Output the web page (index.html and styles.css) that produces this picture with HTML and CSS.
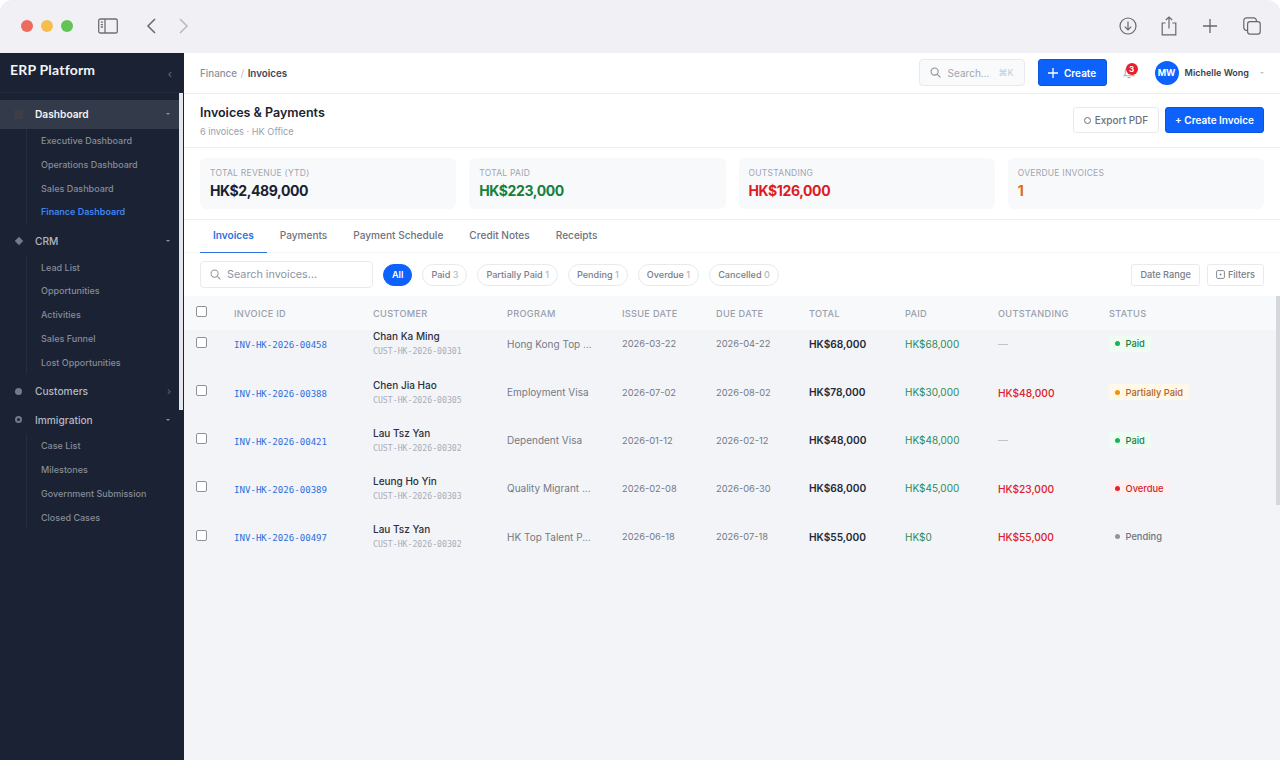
FILE: index.html
```html
<!DOCTYPE html>
<html lang="en">
<head>
  <meta charset="UTF-8">
  <title>Invoices &amp; Payments</title>
  <link rel="stylesheet" href="styles.css">
</head>
<body>
  <!-- Browser chrome -->
  <div class="browser-bar">
    <div class="browser-left">
      <span class="light light-red"></span>
      <span class="light light-yellow"></span>
      <span class="light light-green"></span>
      <svg class="sidebar-toggle" width="20" height="16" viewBox="0 0 20 16" fill="none" stroke="#6f7075" stroke-width="1.3">
        <rect x="0.7" y="1" width="18.6" height="14" rx="1.6"/>
        <path d="M7 1v14M2.8 4.2h2.2M2.8 6.6h2.2M2.8 9h2.2"/>
      </svg>
      <svg class="nav-back" width="10" height="16" viewBox="0 0 10 16" fill="none" stroke="#67686d" stroke-width="1.5"><path d="M9 1 2 8l7 7"/></svg>
      <svg class="nav-forward" width="10" height="16" viewBox="0 0 10 16" fill="none" stroke="#b9bac0" stroke-width="1.5"><path d="m1 1 7 7-7 7"/></svg>
    </div>
    <div class="browser-right">
      <svg width="18" height="18" viewBox="0 0 18 18" fill="none" stroke="#67686d" stroke-width="1.2"><circle cx="9" cy="9" r="8"/><path d="M9 4.6v8M5.8 9.6 9 12.8l3.2-3.2"/></svg>
      <svg width="16" height="20" viewBox="0 0 16 20" fill="none" stroke="#67686d" stroke-width="1.2"><path d="M4.6 7H1.2v11.8h13.6V7h-3.4M8 12.6V1M4.8 4 8 1l3.2 3"/></svg>
      <svg width="14" height="14" viewBox="0 0 14 14" fill="none" stroke="#67686d" stroke-width="1.3"><path d="M7 0v14M0 7h14"/></svg>
      <svg width="18" height="18" viewBox="0 0 18 18" fill="none" stroke="#67686d" stroke-width="1.2"><rect x="4.6" y="4.6" width="12.6" height="12.6" rx="2.4"/><path d="M4.6 13.4h-1A2.8 2.8 0 0 1 .8 10.6V3.4A2.6 2.6 0 0 1 3.4.8h7.2a2.8 2.8 0 0 1 2.8 2.8v1"/></svg>
    </div>
  </div>

  <div class="app">
    <!-- Sidebar -->
    <aside class="sidebar">
      <div class="brand">
        <span class="brand-name">ERP Platform</span>
        <span class="brand-collapse">&#8249;</span>
      </div>
      <nav class="nav">
        <div class="nav-section nav-section-open">
          <span class="nav-icon nav-icon-square"></span>
          <span class="nav-label">Dashboard</span>
          <span class="caret-down"></span>
        </div>
        <div class="nav-sub">
          <a class="nav-link">Executive Dashboard</a>
          <a class="nav-link">Operations Dashboard</a>
          <a class="nav-link">Sales Dashboard</a>
          <a class="nav-link nav-link-active">Finance Dashboard</a>
        </div>
        <div class="nav-section">
          <span class="nav-icon nav-icon-diamond"></span>
          <span class="nav-label">CRM</span>
          <span class="caret-down"></span>
        </div>
        <div class="nav-sub">
          <a class="nav-link">Lead List</a>
          <a class="nav-link">Opportunities</a>
          <a class="nav-link">Activities</a>
          <a class="nav-link">Sales Funnel</a>
          <a class="nav-link">Lost Opportunities</a>
        </div>
        <div class="nav-section">
          <span class="nav-icon nav-icon-dot"></span>
          <span class="nav-label">Customers</span>
          <span class="caret-right">&#8250;</span>
        </div>
        <div class="nav-section">
          <span class="nav-icon nav-icon-ring"></span>
          <span class="nav-label">Immigration</span>
          <span class="caret-down"></span>
        </div>
        <div class="nav-sub">
          <a class="nav-link">Case List</a>
          <a class="nav-link">Milestones</a>
          <a class="nav-link">Government Submission</a>
          <a class="nav-link">Closed Cases</a>
        </div>
      </nav>
      <div class="sidebar-scroll"></div>
    </aside>

    <main class="content">
      <!-- Top bar -->
      <header class="topbar">
        <div class="crumbs">
          <span>Finance</span><span class="crumb-sep">/</span><span class="crumb-current">Invoices</span>
        </div>
        <div class="topbar-tools">
          <div class="global-search">
            <svg width="11" height="11" viewBox="0 0 12 12" fill="none" stroke="#8d929c" stroke-width="1.2"><circle cx="5" cy="5" r="3.9"/><path d="m8 8 3.4 3.4"/></svg>
            <span class="global-search-text">Search...</span>
            <span class="global-search-key">&#8984;K</span>
          </div>
          <button class="btn-create">
            <svg width="10" height="10" viewBox="0 0 10 10" fill="none" stroke="#fff" stroke-width="1.3"><path d="M5 0v10M0 5h10"/></svg>
            Create
          </button>
          <div class="bell">
            <svg width="12" height="13" viewBox="0 0 12 13" fill="none" stroke="#a9aeb8" stroke-width="1.1"><path d="M1 9.8h10L9.7 8V5a3.7 3.7 0 0 0-7.4 0v3L1 9.8ZM4.6 11.6h2.8"/></svg>
            <span class="bell-badge">3</span>
          </div>
          <div class="user">
            <span class="avatar">MW</span>
            <span class="user-name">Michelle Wong</span>
            <span class="user-caret"></span>
          </div>
        </div>
      </header>

      <!-- Page heading -->
      <section class="page-head">
        <div class="page-title">
          <h1>Invoices &amp; Payments</h1>
          <p>6 invoices &middot; HK Office</p>
        </div>
        <div class="page-actions">
          <button class="btn-outline"><span class="export-ring"></span>Export PDF</button>
          <button class="btn-primary">+ Create Invoice</button>
        </div>
      </section>

      <!-- Stats -->
      <section class="stats">
        <div class="stat-card">
          <div class="stat-label">Total Revenue (YTD)</div>
          <div class="stat-value">HK$2,489,000</div>
        </div>
        <div class="stat-card">
          <div class="stat-label">Total Paid</div>
          <div class="stat-value stat-green">HK$223,000</div>
        </div>
        <div class="stat-card">
          <div class="stat-label">Outstanding</div>
          <div class="stat-value stat-red">HK$126,000</div>
        </div>
        <div class="stat-card">
          <div class="stat-label">Overdue Invoices</div>
          <div class="stat-value stat-orange">1</div>
        </div>
      </section>

      <!-- Tabs -->
      <div class="tabs">
        <a class="tab tab-active">Invoices</a>
        <a class="tab">Payments</a>
        <a class="tab">Payment Schedule</a>
        <a class="tab">Credit Notes</a>
        <a class="tab">Receipts</a>
      </div>

      <!-- Filters -->
      <div class="filters">
        <div class="invoice-search">
          <svg width="11" height="11" viewBox="0 0 12 12" fill="none" stroke="#8d929c" stroke-width="1.1"><circle cx="5" cy="5" r="3.9"/><path d="m8 8 3.4 3.4"/></svg>
          <span>Search invoices...</span>
        </div>
        <div class="chips">
          <span class="chip chip-active">All</span>
          <span class="chip">Paid <em>3</em></span>
          <span class="chip">Partially Paid <em>1</em></span>
          <span class="chip">Pending <em>1</em></span>
          <span class="chip">Overdue <em>1</em></span>
          <span class="chip">Cancelled <em>0</em></span>
        </div>
        <div class="filter-actions">
          <button class="btn-small">Date Range</button>
          <button class="btn-small">
            <svg width="9" height="9" viewBox="0 0 9 9" fill="none" stroke="#777d88" stroke-width="0.9"><rect x="0.6" y="0.6" width="7.8" height="7.8" rx="1"/><circle cx="4.5" cy="4.5" r="0.6" fill="#777d88"/></svg>
            Filters
          </button>
        </div>
      </div>

      <!-- Table -->
      <div class="table">
        <div class="row row-head">
          <input type="checkbox" class="check">
          <span>Invoice ID</span>
          <span>Customer</span>
          <span>Program</span>
          <span>Issue Date</span>
          <span>Due Date</span>
          <span>Total</span>
          <span>Paid</span>
          <span>Outstanding</span>
          <span>Status</span>
        </div>
        <div class="table-body">
          <div class="rows">
            <div class="row">
              <input type="checkbox" class="check">
              <span class="inv-id">INV-HK-2026-00458</span>
              <div><div class="cust-name">Chan Ka Ming</div><div class="cust-id">CUST-HK-2026-00301</div></div>
              <span class="cell">Hong Kong Top ...</span>
              <span class="date">2026-03-22</span>
              <span class="date">2026-04-22</span>
              <span class="total">HK$68,000</span>
              <span class="paid">HK$68,000</span>
              <span class="none">&mdash;</span>
              <div><span class="status status-paid"><i></i>Paid</span></div>
            </div>
            <div class="row">
              <input type="checkbox" class="check">
              <span class="inv-id">INV-HK-2026-00388</span>
              <div><div class="cust-name">Chen Jia Hao</div><div class="cust-id">CUST-HK-2026-00305</div></div>
              <span class="cell">Employment Visa</span>
              <span class="date">2026-07-02</span>
              <span class="date">2026-08-02</span>
              <span class="total">HK$78,000</span>
              <span class="paid">HK$30,000</span>
              <span class="owed">HK$48,000</span>
              <div><span class="status status-partial"><i></i>Partially Paid</span></div>
            </div>
            <div class="row">
              <input type="checkbox" class="check">
              <span class="inv-id">INV-HK-2026-00421</span>
              <div><div class="cust-name">Lau Tsz Yan</div><div class="cust-id">CUST-HK-2026-00302</div></div>
              <span class="cell">Dependent Visa</span>
              <span class="date">2026-01-12</span>
              <span class="date">2026-02-12</span>
              <span class="total">HK$48,000</span>
              <span class="paid">HK$48,000</span>
              <span class="none">&mdash;</span>
              <div><span class="status status-paid"><i></i>Paid</span></div>
            </div>
            <div class="row">
              <input type="checkbox" class="check">
              <span class="inv-id">INV-HK-2026-00389</span>
              <div><div class="cust-name">Leung Ho Yin</div><div class="cust-id">CUST-HK-2026-00303</div></div>
              <span class="cell">Quality Migrant ...</span>
              <span class="date">2026-02-08</span>
              <span class="date">2026-06-30</span>
              <span class="total">HK$68,000</span>
              <span class="paid">HK$45,000</span>
              <span class="owed">HK$23,000</span>
              <div><span class="status status-overdue"><i></i>Overdue</span></div>
            </div>
            <div class="row">
              <input type="checkbox" class="check">
              <span class="inv-id">INV-HK-2026-00497</span>
              <div><div class="cust-name">Lau Tsz Yan</div><div class="cust-id">CUST-HK-2026-00302</div></div>
              <span class="cell">HK Top Talent P...</span>
              <span class="date">2026-06-18</span>
              <span class="date">2026-07-18</span>
              <span class="total">HK$55,000</span>
              <span class="paid">HK$0</span>
              <span class="owed">HK$55,000</span>
              <div><span class="status status-pending"><i></i>Pending</span></div>
            </div>
          </div>
        </div>
        <div class="table-scroll"></div>
      </div>
    </main>
  </div>
</body>
</html>
```

FILE: styles.css
```css
:root {
  --blue: #0d62fb;
  --link-blue: #2f6fe0;
  --navy: #1a2233;
  --ink: #1d2433;
  --text: #5f6672;
  --muted: #9aa0ab;
  --line: #eceef1;
  --soft: #f8f9fb;
  --page: #f3f4f7;
}

* {
  box-sizing: border-box;
}

html, body {
  height: 100%;
}

body {
  margin: 0;
  overflow: hidden;
  background: #fff;
  color: var(--ink);
  font-family: Inter, "Liberation Sans", sans-serif;
  font-size: 10px;
}

button {
  font-family: inherit;
  cursor: pointer;
}

/* Browser chrome */
.browser-bar {
  height: 53px;
  display: flex;
  align-items: center;
  justify-content: space-between;
  padding: 0 19px 1px 21px;
  background: #f1f1f5;
  border-radius: 12px 12px 0 0;
}

.browser-left {
  display: flex;
  align-items: center;
}

.browser-right {
  display: flex;
  align-items: center;
  gap: 25px;
}

.browser-right svg:nth-child(2) {
  margin: 0 1px 0 -1px;
}

.browser-right svg:nth-child(3) {
  margin-right: 1px;
}

.light {
  width: 12px;
  height: 12px;
  border-radius: 50%;
  margin-right: 8px;
}

.light-red { background: #ec6a5e; }
.light-yellow { background: #f4bf4f; }
.light-green { background: #61c454; }

.sidebar-toggle {
  margin-left: 17px;
}

.nav-back {
  margin-left: 28px;
}

.nav-forward {
  margin-left: 23px;
}

/* App layout */
.app {
  display: flex;
  height: 707px;
}

.sidebar {
  position: relative;
  flex: 0 0 184px;
  background: var(--navy);
  color: #fff;
}

.brand {
  height: 40px;
  display: flex;
  align-items: flex-start;
  justify-content: space-between;
  padding: 8px 12px 0 10px;
  border-bottom: 1px solid #222a3b;
}

.brand-name {
  font-family: Lato, Inter, sans-serif;
  font-size: 14px;
  font-weight: 700;
  letter-spacing: 0.2px;
  color: #f3f4f6;
}

.brand-collapse {
  margin-top: 8px;
  font-size: 11px;
  line-height: 11px;
  color: #6b7280;
}

.nav {
  padding-top: 7px;
  padding-right: 5px;
}

.nav-section {
  display: flex;
  align-items: center;
  height: 28.5px;
  padding: 0 9px 0 14px;
  font-size: 10.2px;
  font-weight: 500;
  color: #b4b9c2;
}

.nav-section-open {
  background: #333a49;
  color: #f0f1f3;
  font-weight: 600;
}

.nav-icon {
  width: 9px;
  height: 9px;
  margin-right: 12px;
  flex: none;
}

.nav-icon-square {
  background: #3f3d47;
  border-radius: 1px;
}

.nav-icon-diamond {
  width: 6px;
  height: 6px;
  margin: 0 13.5px 0 1.5px;
  background: #737986;
  transform: rotate(45deg);
}

.nav-icon-dot {
  width: 7px;
  height: 7px;
  margin: 0 13px 0 1px;
  background: #737986;
  border-radius: 50%;
}

.nav-icon-ring {
  width: 7px;
  height: 7px;
  margin: 0 13px 0 1px;
  border: 2px solid #737986;
  border-radius: 50%;
}

.nav-label {
  flex: 1;
}

.caret-down {
  width: 0;
  height: 0;
  border-left: 2px solid transparent;
  border-right: 2px solid transparent;
  border-top: 2px solid #8b909b;
}

.caret-right {
  margin-right: -1px;
  font-size: 10px;
  color: #5f6573;
}

.nav-sub {
  display: flex;
  flex-direction: column;
  margin: 0.5px 0 2.5px 26px;
  padding-left: 14px;
  border-left: 1px solid #252d3e;
}

.nav-link {
  height: 23.75px;
  line-height: 23.75px;
  font-size: 9px;
  font-weight: 500;
  color: #868c98;
}

.nav-link-active {
  color: #3f84f2;
  font-weight: 600;
}

.sidebar-scroll {
  position: absolute;
  top: 40px;
  right: 1px;
  width: 4px;
  height: 317px;
  background: #e3e6ea;
}

/* Main content */
.content {
  flex: 1;
  min-width: 0;
  display: flex;
  flex-direction: column;
  background: #fff;
}

.topbar {
  height: 41px;
  flex: none;
  display: flex;
  align-items: center;
  justify-content: space-between;
  padding: 0 16px 1px;
  border-bottom: 1px solid var(--line);
}

.crumbs {
  display: flex;
  gap: 3.5px;
  margin-top: 1px;
  font-size: 9.8px;
  font-weight: 500;
  color: #8b919c;
}

.crumb-sep {
  color: #c2c6cd;
}

.crumb-current {
  color: #3f4653;
  font-weight: 600;
}

.topbar-tools {
  display: flex;
  align-items: center;
}

.global-search {
  width: 106px;
  height: 27px;
  display: flex;
  align-items: center;
  padding: 0 10px;
  background: #f9fafb;
  border: 1px solid #e8eaee;
  border-radius: 4px;
  color: #a0a5af;
}

.global-search-text {
  flex: 1;
  margin-left: 7px;
  font-size: 10px;
}

.global-search-key {
  font-size: 9px;
  color: #c8cbd1;
}

.btn-create {
  width: 69px;
  height: 27px;
  margin-left: 13px;
  display: flex;
  align-items: center;
  justify-content: center;
  gap: 6px;
  background: var(--blue);
  border: 1px solid #0b55dd;
  border-radius: 3px;
  color: #fff;
  font-size: 10px;
  font-weight: 600;
}

.bell {
  position: relative;
  width: 14px;
  height: 14px;
  margin-left: 16px;
  color: #a9aeb8;
}

.bell svg {
  display: block;
}

.bell-badge {
  position: absolute;
  top: -3px;
  left: 3px;
  width: 12px;
  height: 12px;
  line-height: 12px;
  text-align: center;
  border-radius: 50%;
  background: #e8202e;
  color: #fff;
  font-size: 8px;
  font-weight: 700;
}

.user {
  display: flex;
  align-items: center;
  margin-left: 18px;
}

.avatar {
  width: 24px;
  height: 24px;
  line-height: 24px;
  text-align: center;
  border-radius: 50%;
  background: var(--blue);
  color: #fff;
  font-size: 9px;
  font-weight: 700;
}

.user-name {
  margin-left: 6px;
  font-size: 9px;
  font-weight: 600;
  color: #3a414e;
}

.user-caret {
  margin-left: 11px;
  border-left: 2px solid transparent;
  border-right: 2px solid transparent;
  border-top: 2px solid #c0c4cb;
}

.page-head {
  height: 54px;
  flex: none;
  display: flex;
  align-items: center;
  justify-content: space-between;
  padding: 0 16px;
  border-bottom: 1px solid var(--line);
}

.page-title {
  padding-top: 1px;
}

.page-head h1 {
  margin: 0;
  font-size: 12.5px;
  font-weight: 600;
  line-height: 18px;
  color: #1a2130;
}

.page-head p {
  margin: 4px 0 0;
  font-size: 9.2px;
  line-height: 12px;
  color: #9aa0ab;
}

.page-actions {
  display: flex;
  gap: 6px;
  margin-top: -1px;
}

.btn-outline {
  width: 86px;
  height: 26px;
  display: flex;
  align-items: center;
  justify-content: center;
  gap: 4px;
  background: #fff;
  border: 1px solid #e8eaee;
  border-radius: 3px;
  color: #6a707c;
  font-size: 10px;
  font-weight: 500;
}

.export-ring {
  width: 7px;
  height: 7px;
  border: 1px solid #6a707c;
  border-radius: 50%;
}

.btn-primary {
  width: 99px;
  height: 26px;
  background: var(--blue);
  border: 1px solid #0b55dd;
  border-radius: 3px;
  color: #fff;
  font-size: 10px;
  font-weight: 600;
}

/* Stats */
.stats {
  height: 72px;
  flex: none;
  display: grid;
  grid-template-columns: repeat(4, 1fr);
  gap: 13px;
  padding: 10px 16px;
  border-bottom: 1px solid var(--line);
}

.stat-card {
  padding: 10px 10px 8px;
  background: var(--soft);
  border-radius: 6px;
}

.stat-label {
  font-size: 8.5px;
  line-height: 11px;
  text-transform: uppercase;
  letter-spacing: 0.25px;
  color: #a0a5af;
}

.stat-value {
  margin-top: 2px;
  font-size: 14px;
  line-height: 19px;
  font-weight: 700;
  letter-spacing: -0.4px;
  color: #1a2130;
}

.stat-green { color: #15803d; }
.stat-red { color: #dc1c22; }
.stat-orange { color: #e06a12; }

/* Tabs */
.tabs {
  height: 33px;
  flex: none;
  display: flex;
  padding: 0 16px;
  border-bottom: 1px solid #f3f4f6;
}

.tab {
  height: 33px;
  padding: 0 13px;
  line-height: 30px;
  font-size: 10.1px;
  font-weight: 500;
  color: #6d737f;
}

.tab-active {
  color: #2f6fe0;
  font-weight: 600;
  border-bottom: 1.5px solid #2f6fe0;
}

/* Filters */
.filters {
  height: 43px;
  flex: none;
  display: flex;
  align-items: center;
  padding: 0 16px;
}

.invoice-search {
  width: 173px;
  height: 27px;
  display: flex;
  align-items: center;
  gap: 6px;
  padding: 0 9px;
  border: 1px solid #e8eaee;
  border-radius: 4px;
  font-size: 10.8px;
  color: #8e949f;
}

.chips {
  display: flex;
  gap: 10px;
  margin-left: 10px;
}

.chip {
  height: 22px;
  padding: 0 8px;
  line-height: 20px;
  border: 1px solid #e8eaee;
  border-radius: 11px;
  font-size: 9.1px;
  font-weight: 500;
  color: #777d88;
}

.chip em {
  font-style: normal;
  color: #b5b9c1;
}

.chip-active {
  padding: 0 8px;
  background: var(--blue);
  border-color: var(--blue);
  color: #fff;
  font-weight: 600;
}

.filter-actions {
  display: flex;
  gap: 7px;
  margin-left: auto;
}

.btn-small {
  height: 22px;
  display: flex;
  align-items: center;
  gap: 3px;
  padding: 0 8px;
  background: #fff;
  border: 1px solid #e8eaee;
  border-radius: 3px;
  font-size: 9.2px;
  font-weight: 500;
  color: #777d88;
}

/* Table */
.table {
  position: relative;
  flex: 1;
  min-height: 0;
  display: flex;
  flex-direction: column;
  background: var(--page);
}

.row {
  display: grid;
  grid-template-columns: 38px 139px 134px 115px 94px 93px 96px 93px 111px 1fr;
  align-items: center;
  height: 48.2px;
  padding-left: 12px;
}

.row-head {
  height: 34px;
  flex: none;
  background: var(--soft);
  font-size: 9.2px;
  font-weight: 500;
  letter-spacing: 0.3px;
  text-transform: uppercase;
  color: #9aa0ab;
}

.table-body {
  flex: 1;
  min-height: 0;
  overflow: hidden;
}

.rows {
  margin-top: -10.2px;
}

.check {
  appearance: none;
  width: 11px;
  height: 11px;
  margin: -3px 0 0;
  background: #fff;
  border: 1px solid #8f9196;
  border-radius: 2px;
}

.row-head .check {
  margin-top: -4px;
}

.inv-id {
  padding-top: 3px;
  font-family: "DejaVu Sans Mono", "Liberation Mono", monospace;
  font-size: 9.1px;
  color: var(--link-blue);
}

.cust-name {
  font-size: 10px;
  line-height: 13px;
  font-weight: 500;
  color: #2a313e;
}

.cust-id {
  font-family: "DejaVu Sans Mono", "Liberation Mono", monospace;
  font-size: 8.2px;
  line-height: 12px;
  margin-top: 2px;
  color: #a9adb6;
}

.cell {
  font-size: 10px;
  color: #747a86;
}

.date {
  font-size: 9.3px;
  color: #747a86;
}

.total {
  font-size: 10.2px;
  font-weight: 600;
  color: #232a3a;
}

.paid {
  font-size: 10px;
  color: #2e8b57;
}

.owed {
  padding-top: 1px;
  font-size: 10.2px;
  font-weight: 500;
  color: #dc2027;
}

.none {
  font-size: 10px;
  color: #b5b9c1;
}

.status {
  display: inline-flex;
  align-items: center;
  gap: 5.5px;
  height: 16px;
  padding: 0 6px;
  border-radius: 3px;
  font-size: 9.3px;
  font-weight: 500;
}

.status i {
  width: 5px;
  height: 5px;
  border-radius: 50%;
}

.status-paid { background: #f0fbf4; color: #15803d; }
.status-paid i { background: #16b554; }
.status-partial { background: #fff9ea; color: #b4611a; }
.status-partial i { background: #f7900f; }
.status-overdue { background: #fdf0f1; color: #d21c26; }
.status-overdue i { background: #e8202e; }
.status-pending { background: transparent; color: #6d737f; }
.status-pending i { background: #8f95a0; }

.table-scroll {
  position: absolute;
  top: 0;
  right: 0;
  width: 4px;
  height: 209px;
  background: #d4d7dc;
}
```
